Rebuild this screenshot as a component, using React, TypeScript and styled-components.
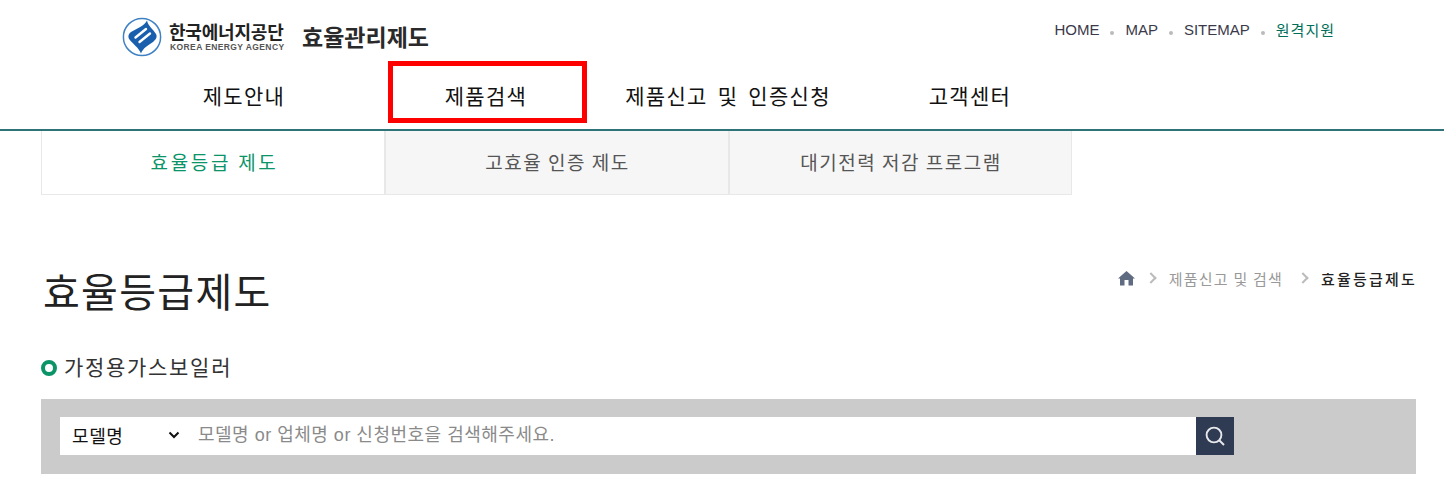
import React from "react";
import styled, { createGlobalStyle } from "styled-components";

const FONT = `"Noto Sans CJK KR", "Liberation Sans", sans-serif`;
const LATIN_FIRST = `"Liberation Sans", "Noto Sans CJK KR", sans-serif`;

const GlobalStyle = createGlobalStyle`
  html, body {
    margin: 0;
    padding: 0;
    background: #fff;
    overflow: hidden;
  }
  body {
    font-family: ${FONT};
  }
  * {
    box-sizing: border-box;
  }
`;

const navItems = ["제도안내", "제품검색", "제품신고 및 인증신청", "고객센터"];
const tabs = ["효율등급 제도", "고효율 인증 제도", "대기전력 저감 프로그램"];
const utilLinks = ["HOME", "MAP", "SITEMAP"];

const App = () => {
  return (
    <Page>
      <GlobalStyle />
      <Header>
        <TopRow>
          <LogoLink>
            <LogoMark viewBox="0 0 40 40" aria-hidden="true">
              <circle cx="20" cy="20" r="18.6" fill="#fff" stroke="#3f82c4" strokeWidth="1.5" />
              <path
                d="M25 3.5 C26 9 31 12 34 17 C35.5 20 34 22.5 31 25 C26 28.5 21 31 19 36.5 C17 31 11 27 7.5 22.5 C5.5 19.5 6.5 17 9 15 C15 11.5 22 9 25 3.5 Z"
                fill="#1a5fae"
              />
              <path d="M13.5 20.5 L24 12" stroke="#fff" strokeWidth="2.4" strokeLinecap="round" />
              <path d="M17.5 25 L28 16.5" stroke="#fff" strokeWidth="2.4" strokeLinecap="round" />
            </LogoMark>
            <LogoText>
              <LogoKo>한국에너지공단</LogoKo>
              <LogoEn>KOREA ENERGY AGENCY</LogoEn>
            </LogoText>
            <SiteName>효율관리제도</SiteName>
          </LogoLink>
          <UtilList>
            {utilLinks.map((label) => (
              <React.Fragment key={label}>
                <UtilItem>{label}</UtilItem>
                <UtilDot />
              </React.Fragment>
            ))}
            <UtilItem $accent>원격지원</UtilItem>
          </UtilList>
        </TopRow>
        <Nav>
          {navItems.map((label, i) => (
            <NavItem key={label}>
              {i === 1 && <Highlight />}
              {label}
            </NavItem>
          ))}
        </Nav>
      </Header>

      <TabRow>
        {tabs.map((label, i) => (
          <Tab key={label} $active={i === 0}>
            {label}
          </Tab>
        ))}
      </TabRow>

      <Content>
        <TitleRow>
          <Title>효율등급제도</Title>
          <Breadcrumb>
            <HomeIcon viewBox="0 0 17 16" aria-hidden="true">
              <path d="M8.5 1 L17 8.6 L15 8.6 L15 15.5 L10.5 15.5 L10.5 10 L6.5 10 L6.5 15.5 L2 15.5 L2 8.6 L0 8.6 Z" fill="#5f6b80" />
            </HomeIcon>
            <Chevron />
            <CrumbText>제품신고 및 검색</CrumbText>
            <Chevron />
            <CrumbCurrent>효율등급제도</CrumbCurrent>
          </Breadcrumb>
        </TitleRow>

        <SectionTitle>
          <Ring />
          가정용가스보일러
        </SectionTitle>

        <SearchBar>
          <SearchSelect>
            <span>모델명</span>
            <svg width="12" height="8" viewBox="0 0 12 8" aria-hidden="true">
              <path d="M1.5 1.5 L6 6 L10.5 1.5" fill="none" stroke="#111" strokeWidth="2" />
            </svg>
          </SearchSelect>
          <SearchInput placeholder="모델명 or 업체명 or 신청번호을 검색해주세요." />
          <SearchButton type="button" aria-label="검색">
            <svg width="22" height="22" viewBox="0 0 22 22" aria-hidden="true">
              <circle cx="10" cy="10" r="7.4" fill="none" stroke="#e6e8ec" strokeWidth="1.9" />
              <path d="M15.5 15.5 L20 20" stroke="#e6e8ec" strokeWidth="1.9" />
            </svg>
          </SearchButton>
        </SearchBar>
      </Content>
    </Page>
  );
};

const Page = styled.div`
  width: 1444px;
  height: 491px;
  overflow: hidden;
  background: #fff;
`;

const Header = styled.header`
  height: 131px;
  border-bottom: 2px solid #2d7377;
`;

const TopRow = styled.div`
  height: 61px;
  padding: 18px 109px 0 122px;
  display: flex;
  justify-content: space-between;
  align-items: flex-start;
`;

const LogoLink = styled.div`
  display: flex;
  align-items: center;
  height: 38px;
`;

const LogoMark = styled.svg`
  width: 40px;
  height: 40px;
  margin-right: 7px;
`;

const LogoText = styled.div`
  display: flex;
  flex-direction: column;
  width: 115px;
  margin-top: -2px;
`;

const LogoKo = styled.span`
  font-size: 18px;
  line-height: 21px;
  font-weight: 700;
  color: #222;
  letter-spacing: -0.2px;
  white-space: nowrap;
`;

const LogoEn = styled.span`
  font-family: "Liberation Sans", sans-serif;
  font-size: 8.5px;
  line-height: 10px;
  font-weight: 700;
  color: #555;
  letter-spacing: 0.4px;
  padding-left: 1px;
  white-space: nowrap;
`;

const SiteName = styled.span`
  margin: -3px 0 0 18px;
  font-size: 23px;
  font-weight: 700;
  color: #2a2a2a;
  white-space: nowrap;
`;

const UtilList = styled.div`
  display: flex;
  align-items: center;
  height: 22px;
`;

const UtilItem = styled.span<{ $accent?: boolean }>`
  font-family: ${LATIN_FIRST};
  font-size: 15px;
  letter-spacing: ${(p) => (p.$accent ? "1px" : "0")};
  color: ${(p) => (p.$accent ? "#006f5a" : "#3a3a4a")};
`;

const UtilDot = styled.span`
  width: 4px;
  height: 4px;
  margin: 8px 11px 0 11px;
  background: #bbb;
  border-radius: 50%;
`;

const Nav = styled.nav`
  display: grid;
  grid-template-columns: 242px 242px 242px 242px;
  padding-left: 123px;
  height: 62px;
`;

const NavItem = styled.div`
  position: relative;
  display: flex;
  align-items: center;
  justify-content: center;
  font-size: 21px;
  letter-spacing: 1.3px;
  word-spacing: 4px;
  color: #111;
  white-space: nowrap;
  padding-top: 5px;
`;

const Highlight = styled.span`
  position: absolute;
  top: 0;
  left: 23px;
  width: 199px;
  height: 62px;
  border: 5px solid #f00;
`;

const TabRow = styled.div`
  display: grid;
  grid-template-columns: 344px 344px 343px;
  margin-left: 41px;
  width: 1031px;
  height: 64px;
`;

const Tab = styled.div<{ $active?: boolean }>`
  display: flex;
  align-items: center;
  justify-content: center;
  border: 1px solid #e8e8e8;
  border-top: 0;
  background: ${(p) => (p.$active ? "#fff" : "#f6f6f6")};
  color: ${(p) => (p.$active ? "#0a9468" : "#555")};
  font-size: 19px;
  padding: 0 0 2px ${(p) => (p.$active ? "3px" : "1px")};
  letter-spacing: ${(p) => (p.$active ? "2.7px" : "1.5px")};
`;

const Content = styled.main`
  padding: 0 28px 0 41px;
`;

const TitleRow = styled.div`
  display: flex;
  justify-content: space-between;
  align-items: flex-start;
  height: 158px;
  padding-top: 65px;
`;

const Title = styled.h1`
  margin: 0;
  font-size: 40px;
  line-height: 60px;
  font-weight: 400;
  color: #222;
  letter-spacing: 1.3px;
  padding-left: 2px;
`;

const Breadcrumb = styled.div`
  display: flex;
  align-items: center;
  height: 36px;
  font-size: 15px;
`;

const HomeIcon = styled.svg`
  width: 17px;
  height: 16px;
  margin-right: 1px;
`;

const Chevron = styled.span`
  width: 8px;
  height: 8px;
  margin: 0 14px 0 11px;
  border-top: 2px solid #bbb;
  border-right: 2px solid #bbb;
  transform: rotate(45deg);
`;

const CrumbText = styled.span`
  color: #999;
  letter-spacing: 1.2px;
  margin-right: 5px;
`;

const CrumbCurrent = styled.span`
  color: #222;
  font-weight: 500;
  letter-spacing: 2.2px;
  margin-right: -1px;
`;

const SectionTitle = styled.h2`
  margin: 0;
  height: 46px;
  display: flex;
  align-items: flex-start;
  font-size: 21px;
  line-height: 27px;
  font-weight: 400;
  color: #333;
  letter-spacing: 1.7px;
`;

const Ring = styled.span`
  width: 16px;
  height: 16px;
  margin: 7px 7px 0 0;
  border: 4px solid #0a9468;
  border-radius: 50%;
`;

const SearchBar = styled.div`
  height: 75px;
  display: flex;
  align-items: center;
  padding: 0 0 2px 19px;
  background: #cbcbcb;
`;

const SearchSelect = styled.div`
  width: 130px;
  height: 38px;
  padding: 0 10px 1px 12px;
  display: flex;
  align-items: center;
  justify-content: space-between;
  background: #fff;
  color: #111;
  font-size: 18px;
  letter-spacing: 0.6px;
`;

const SearchInput = styled.input`
  width: 1006px;
  height: 38px;
  padding: 0 8px;
  border: 0;
  outline: 0;
  background: #fff;
  font-family: ${LATIN_FIRST};
  font-size: 18px;
  letter-spacing: 0.5px;

  &::placeholder {
    color: #8a8a8a;
    opacity: 1;
  }
`;

const SearchButton = styled.button`
  width: 38px;
  height: 38px;
  padding: 0;
  border: 0;
  display: flex;
  align-items: center;
  justify-content: center;
  background: #2f3a53;
`;

export default App;
